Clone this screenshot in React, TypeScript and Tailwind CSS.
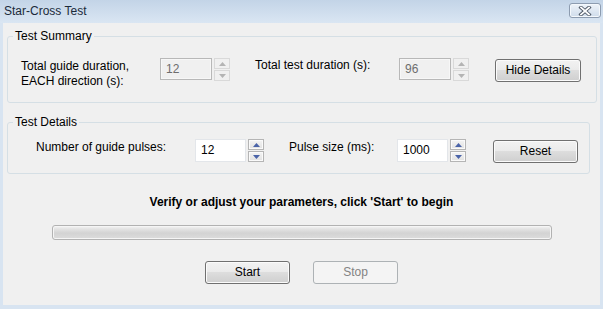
import React from 'react';

const Spin: React.FC<{ disabled?: boolean }> = ({ disabled }) => {
  const box = disabled
    ? 'h-[11px] w-[16px] flex items-center justify-center border border-[#d9d9d9] bg-[#f0f0f0]'
    : 'h-[11px] w-[16px] flex items-center justify-center border border-[#b5b5b5] bg-linear-to-b from-[#f4f4f4] to-[#e1e1e1] shadow-[inset_0_0_0_1px_#fafafa]';
  const fill = disabled ? '#b4b4b4' : '#4a63a8';
  return (
    <div className="flex flex-col gap-[1px] ml-[2px]">
      <div className={box}>
        <svg width="7" height="4" viewBox="0 0 7 4">
          <polygon points="3.5,0 7,4 0,4" fill={fill} />
        </svg>
      </div>
      <div className={box}>
        <svg width="7" height="4" viewBox="0 0 7 4">
          <polygon points="0,0 7,0 3.5,4" fill={fill} />
        </svg>
      </div>
    </div>
  );
};

const Field: React.FC<{ value: string; disabled?: boolean; w: string; h: string }> = ({ value, disabled, w, h }) => (
  <div
    className={
      disabled
        ? `${w} ${h} flex items-center pl-[5px] border border-[#b8b8b8] bg-[#f0f0f0] text-[#6d6d6d] shadow-[inset_0_0_0_1px_#f7f7f7]`
        : `${w} ${h} flex items-center pl-[5px] border border-[#e3e6ea] bg-white text-black`
    }
  >
    {value}
  </div>
);

const WinButton: React.FC<{ label: string; disabled?: boolean; w?: string }> = ({ label, disabled, w = 'w-[85px]' }) => (
  <button
    className={
      disabled
        ? `${w} h-[23px] rounded-[3px] border border-[#adb2b5] bg-[#f4f4f4] text-[#838383] flex items-center justify-center`
        : `${w} h-[23px] rounded-[3px] border border-[#707070] bg-[linear-gradient(#f2f2f2,#ebebeb_45%,#dddddd_50%,#cfcfcf)] shadow-[inset_0_0_0_1px_#fbfbfb] text-black flex items-center justify-center`
    }
  >
    {label}
  </button>
);

const App: React.FC = () => {
  return (
    <div className="w-[603px] h-[309px] flex flex-col bg-[#d8e4f1] font-['Segoe_UI','Liberation_Sans',sans-serif] text-[12px] leading-[15px] text-black select-none">
      {/* title bar */}
      <div className="h-[23px] flex items-start justify-between bg-linear-to-b from-[#c3d4e7] to-[#dae6f3]">
        <span className="pl-[4px] pt-[4px] text-[12px] text-[#1b2a3a]">Star-Cross Test</span>
        <div className="mt-[3px] mr-[2px] w-[32px] h-[15px] rounded-[3px] border border-[#8d9cb0] bg-linear-to-b from-[#eef3f9] to-[#cfdceb] shadow-[inset_0_0_0_1px_#f4f8fc] flex items-center justify-center">
          <svg width="14" height="10" viewBox="0 0 14 10">
            <path d="M3 1.5 L11 8.5 M11 1.5 L3 8.5" stroke="#4b5563" strokeWidth="3.6" strokeLinecap="square" />
            <path d="M3 1.5 L11 8.5 M11 1.5 L3 8.5" stroke="#ffffff" strokeWidth="1.8" strokeLinecap="square" />
          </svg>
        </div>
      </div>

      {/* body */}
      <div className="flex-1 flex flex-col bg-[#f0f0f0] border-l-[3px] border-r-[3px] border-b-[4px] border-[#d8e4f1]">
        <fieldset className="mt-[6px] ml-[4px] w-[590px] h-[74px] border border-[#d5dfe5] rounded-[3px] p-0 m-0">
          <legend className="ml-[5px] px-[2px] h-[15px] leading-[15px]">Test Summary</legend>
          <div className="flex items-start pt-[14px] pl-[13px]">
            <div className="w-[139px] pt-[1px]">
              <div>Total guide duration,</div>
              <div>EACH direction (s):</div>
            </div>
            <Field value="12" disabled w="w-[52px]" h="h-[22px]" />
            <Spin disabled />
            <div className="ml-[25px] w-[144px]">Total test duration (s):</div>
            <Field value="96" disabled w="w-[52px]" h="h-[22px]" />
            <Spin disabled />
            <div className="ml-[26px] mt-[1px]">
              <WinButton label="Hide Details" w="w-[86px]" />
            </div>
          </div>
        </fieldset>

        <fieldset className="mt-[12px] ml-[4px] w-[583px] h-[59px] border border-[#d5dfe5] rounded-[3px] p-0 m-0">
          <legend className="ml-[5px] px-[2px] h-[15px] leading-[15px]">Test Details</legend>
          <div className="flex items-start pt-[9px] pl-[28px]">
            <div className="w-[159px] pt-[1px]">Number of guide pulses:</div>
            <Field value="12" w="w-[51px]" h="h-[23px]" />
            <Spin />
            <div className="ml-[25px] w-[108px] pt-[1px]">Pulse size (ms):</div>
            <Field value="1000" w="w-[51px]" h="h-[23px]" />
            <Spin />
            <div className="ml-[27px] mt-[1px]">
              <WinButton label="Reset" />
            </div>
          </div>
        </fieldset>

        <div className="mt-[21px] text-center font-bold">Verify or adjust your parameters, click 'Start' to begin</div>

        <div className="mt-[15px] mx-auto w-[500px] h-[15px] rounded-[3px] border border-[#b2b2b2] bg-[linear-gradient(#f4f4f4,#e2e2e2_25%,#d3d3d3_55%,#dcdcdc)] shadow-[inset_0_0_0_1px_#f5f5f5]" />

        <div className="mt-[21px] flex justify-center gap-[23px]">
          <WinButton label="Start" />
          <WinButton label="Stop" disabled />
        </div>
      </div>
    </div>
  );
};

export default App;
